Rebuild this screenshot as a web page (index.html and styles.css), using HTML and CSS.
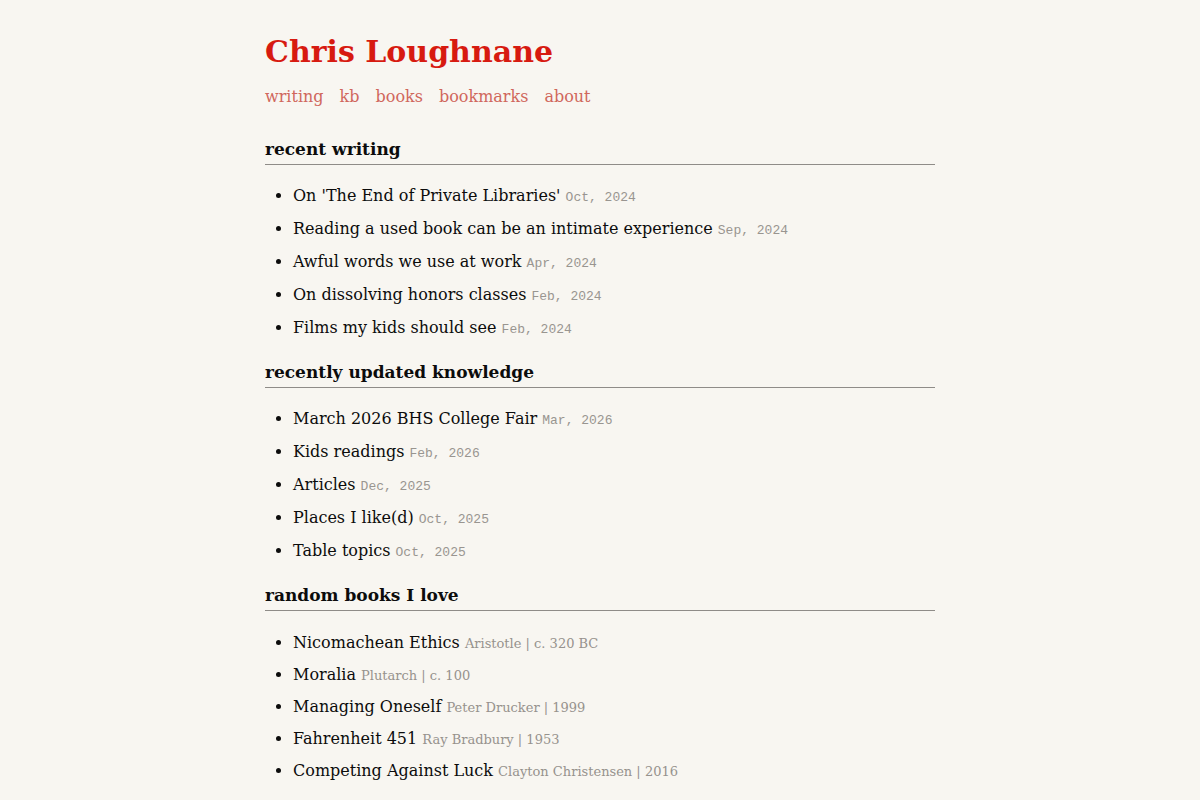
FILE: index.html
```html
<!DOCTYPE html>
<html>
<head>
<meta charset="utf-8">
<link rel="stylesheet" href="styles.css">
</head>
<body>
<main class="page">
  <header class="header">
    <h1 class="title">Chris Loughnane</h1>
    <nav class="nav">
      <a href="#">writing</a>
      <a href="#">kb</a>
      <a href="#">books</a>
      <a href="#">bookmarks</a>
      <a href="#">about</a>
    </nav>
  </header>

  <section class="section">
    <h2 class="section-title">recent writing</h2>
    <ul class="list">
      <li>On 'The End of Private Libraries' <span class="date">Oct, 2024</span></li>
      <li>Reading a used book can be an intimate experience <span class="date">Sep, 2024</span></li>
      <li>Awful words we use at work <span class="date">Apr, 2024</span></li>
      <li>On dissolving honors classes <span class="date">Feb, 2024</span></li>
      <li>Films my kids should see <span class="date">Feb, 2024</span></li>
    </ul>
  </section>

  <section class="section">
    <h2 class="section-title">recently updated knowledge</h2>
    <ul class="list">
      <li>March 2026 BHS College Fair <span class="date">Mar, 2026</span></li>
      <li>Kids readings <span class="date">Feb, 2026</span></li>
      <li>Articles <span class="date">Dec, 2025</span></li>
      <li>Places I like(d) <span class="date">Oct, 2025</span></li>
      <li>Table topics <span class="date">Oct, 2025</span></li>
    </ul>
  </section>

  <section class="section">
    <h2 class="section-title">random books I love</h2>
    <ul class="list books">
      <li>Nicomachean Ethics <span class="meta">Aristotle | c. 320 BC</span></li>
      <li>Moralia <span class="meta">Plutarch | c. 100</span></li>
      <li>Managing Oneself <span class="meta">Peter Drucker | 1999</span></li>
      <li>Fahrenheit 451 <span class="meta">Ray Bradbury | 1953</span></li>
      <li>Competing Against Luck <span class="meta">Clayton Christensen | 2016</span></li>
    </ul>
  </section>
</main>
</body>
</html>
```

FILE: styles.css
```css
html, body {
  margin: 0;
  padding: 0;
  background: #f8f6f1;
}
body {
  font-family: "DejaVu Serif", "Liberation Serif", serif;
  color: #0c0c0c;
}
.page {
  max-width: 670px;
  margin: 0 auto;
  padding-top: 30px;
}
.title {
  margin: 0;
  font-size: 30px;
  font-weight: bold;
  color: #d71a10;
  line-height: 44px;
}
.nav {
  display: flex;
  gap: 16px;
  margin-top: 11px;
  font-size: 16px;
  line-height: 24px;
}
.nav a {
  color: #d0675c;
  text-decoration: none;
}
.section-title {
  margin: 17px 0 0;
  font-size: 17px;
  line-height: 22px;
  font-weight: bold;
  padding-bottom: 4px;
  border-bottom: 1px solid #8f8c88;
  color: #0c0c0c;
}
.section:first-of-type .section-title {
  margin-top: 29px;
}
.list {
  margin: 14px 0 0;
  padding-left: 28px;
  font-size: 16px;
}
.list li {
  line-height: 33px;
}
.list.books {
  margin-top: 16px;
}
.books li {
  line-height: 32px;
}
.date {
  font-family: "Liberation Mono", monospace;
  font-size: 13px;
  line-height: 1;
  color: #999590;
}
.meta {
  font-size: 13px;
  line-height: 1;
  color: #96928d;
}
```
